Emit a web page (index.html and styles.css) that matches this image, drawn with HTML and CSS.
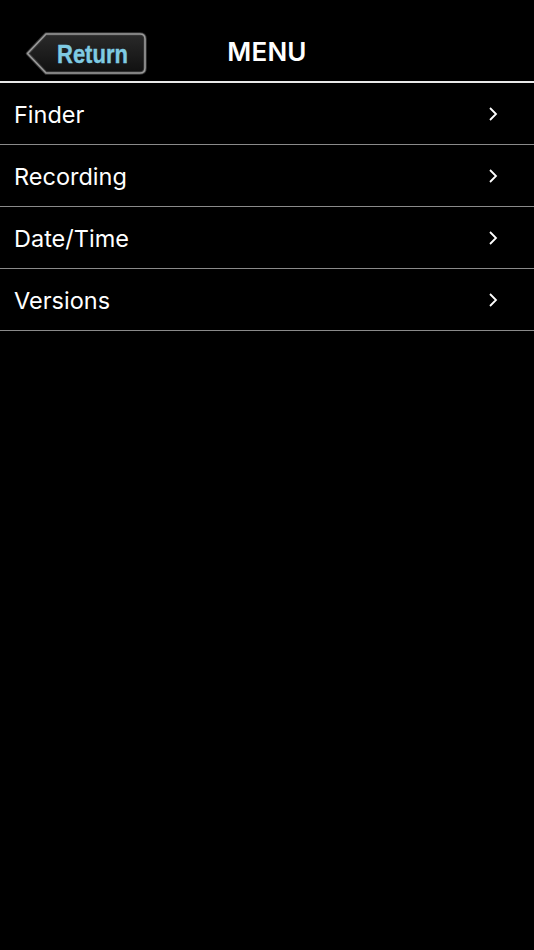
FILE: index.html
```html
<!DOCTYPE html>
<html>
<head>
<meta charset="utf-8">
<link rel="stylesheet" href="styles.css">
</head>
<body>
<header class="header">
  <button class="return-btn">
    <svg class="return-shape" width="122" height="44" viewBox="0 0 122 44">
      <defs>
        <linearGradient id="fill" x1="0" y1="0" x2="0" y2="1">
          <stop offset="0" stop-color="#2a2a2a"/>
          <stop offset="1" stop-color="#101010"/>
        </linearGradient>
      </defs>
      <path d="M2.5,21.5 L21,2 H115 Q120,2 120,7 V36 Q120,41 115,41 H21 Z" fill="url(#fill)" stroke="#3a3a3a" stroke-width="3.5" stroke-linejoin="round"/>
      <path d="M2.5,21.5 L21,2 H115 Q120,2 120,7 V36 Q120,41 115,41 H21 Z" fill="none" stroke="#9a9a9a" stroke-width="1.6" stroke-linejoin="round"/>
    </svg>
    <span class="return-label">Return</span>
  </button>
  <h1 class="title">MENU</h1>
</header>
<ul class="menu">
  <li class="item"><span class="label">Finder</span><span class="chev"><svg width="10" height="16" viewBox="0 0 10 16"><path d="M2,2 L8,8 L2,14" fill="none" stroke="#fff" stroke-width="1.8"/></svg></span></li>
  <li class="item"><span class="label">Recording</span><span class="chev"><svg width="10" height="16" viewBox="0 0 10 16"><path d="M2,2 L8,8 L2,14" fill="none" stroke="#fff" stroke-width="1.8"/></svg></span></li>
  <li class="item"><span class="label">Date/Time</span><span class="chev"><svg width="10" height="16" viewBox="0 0 10 16"><path d="M2,2 L8,8 L2,14" fill="none" stroke="#fff" stroke-width="1.8"/></svg></span></li>
  <li class="item"><span class="label">Versions</span><span class="chev"><svg width="10" height="16" viewBox="0 0 10 16"><path d="M2,2 L8,8 L2,14" fill="none" stroke="#fff" stroke-width="1.8"/></svg></span></li>
</ul>
</body>
</html>
```
FILE: styles.css
```css
html, body {
  margin: 0;
  padding: 0;
  background: #000;
  color: #fff;
  font-family: Inter, "Noto Sans", sans-serif;
}
.header {
  position: relative;
  display: flex;
  align-items: center;
  justify-content: center;
  box-sizing: border-box;
  height: 83px;
  border-bottom: 2px solid #e8e8e8;
}
.return-btn {
  position: absolute;
  left: 25px;
  top: 32px;
  width: 122px;
  height: 44px;
  padding: 0;
  border: 0;
  background: transparent;
  display: flex;
  align-items: center;
}
.return-shape {
  position: absolute;
  left: 0;
  top: 0;
}
.return-label {
  position: relative;
  display: inline-block;
  margin-left: 32px;
  font-family: "Liberation Sans", Arial, sans-serif;
  font-weight: bold;
  font-size: 26.5px;
  color: #7fcbe3;
  white-space: nowrap;
  transform: scaleX(0.83);
  transform-origin: left center;
  margin-top: 0;
  -webkit-text-stroke: 0.4px #7fcbe3;
}
.title {
  margin: 0;
  padding-top: 21px;
  font-size: 26px;
  font-weight: 600;
  letter-spacing: 0.2px;
}
.menu {
  list-style: none;
  margin: 0;
  padding: 0;
}
.item {
  height: 61px;
  border-bottom: 1px solid #8a8a8a;
  display: flex;
  align-items: center;
  justify-content: space-between;
  padding: 0 36px 0 14px;
}
.label {
  font-size: 23.5px;
  font-weight: 400;
  padding-top: 1px;
}
.chev {
  display: flex;
}
```
